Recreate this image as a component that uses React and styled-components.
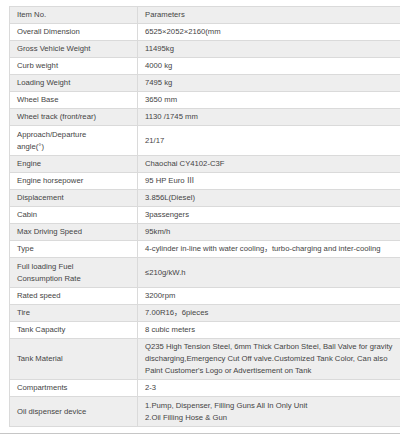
import React from "react";
import styled, { createGlobalStyle } from "styled-components";

const Global = createGlobalStyle`
  html, body {
    margin: 0;
    padding: 0;
    background: #ffffff;
    overflow: hidden;
  }
  body {
    font-family: "Liberation Sans", Arial, "Noto Sans CJK SC", sans-serif;
  }
`;

const Page = styled.div`
  width: 400px;
  padding-top: 6px;
`;

const TableWrap = styled.div`
  padding-left: 9px;
`;

const Table = styled.table`
  border-collapse: collapse;
  width: 400px;
  table-layout: fixed;
  font-size: 7.7px;
  line-height: 12px;
  color: #444;
`;

const Row = styled.tr`
  background: ${(p) => (p.$shaded ? "#eeeeee" : "#ffffff")};
`;

const Cell = styled.td`
  border: 1px solid #dadada;
  padding: ${(p) => (p.$lines === 2 ? "3px 7px 2px" : "2px 7px")};
  vertical-align: middle;
  text-align: left;
  width: ${(p) => (p.$first ? "113px" : "auto")};
`;

const Divider = styled.div`
  margin-top: 6px;
  border-top: 1px solid #c6c6c6;
  height: 1px;
`;

const rows = [
  ["Item No.", "Parameters"],
  ["Overall Dimension", "6525×2052×2160(mm"],
  ["Gross Vehicle Weight", "11495kg"],
  ["Curb weight", "4000 kg"],
  ["Loading Weight", "7495 kg"],
  ["Wheel Base", "3650 mm"],
  ["Wheel track (front/rear)", "1130 /1745 mm"],
  [
    <>
      Approach/Departure
      <br />
      angle(°)
    </>,
    "21/17",
    2,
  ],
  ["Engine", "Chaochai CY4102-C3F"],
  ["Engine horsepower", "95 HP Euro Ⅲ"],
  ["Displacement", "3.856L(Diesel)"],
  ["Cabin", "3passengers"],
  ["Max Driving Speed", "95km/h"],
  ["Type", "4-cylinder in-line with water cooling，turbo-charging and inter-cooling"],
  [
    <>
      Full loading Fuel
      <br />
      Consumption Rate
    </>,
    "≤210g/kW.h",
    2,
  ],
  ["Rated speed", "3200rpm"],
  ["Tire", "7.00R16，6pieces"],
  ["Tank Capacity", "8 cubic meters"],
  [
    "Tank Material",
    "Q235 High Tension Steel, 6mm Thick Carbon Steel, Ball Valve for gravity discharging,Emergency Cut Off valve.Customized Tank Color, Can also Paint Customer's Logo or Advertisement on Tank",
    3,
  ],
  ["Compartments", "2-3"],
  [
    "Oil dispenser device",
    <>
      1.Pump, Dispenser, Filling Guns All In Only Unit
      <br />
      2.Oil Filling Hose &amp; Gun
    </>,
    2,
  ],
];

export default function App() {
  return (
    <Page>
      <Global />
      <TableWrap>
        <Table>
          <tbody>
            {rows.map(([k, v, lines = 1], i) => (
              <Row key={i} $shaded={i % 2 === 0}>
                <Cell $first $lines={lines}>
                  {k}
                </Cell>
                <Cell $lines={lines}>{v}</Cell>
              </Row>
            ))}
          </tbody>
        </Table>
      </TableWrap>
      <Divider />
    </Page>
  );
}
